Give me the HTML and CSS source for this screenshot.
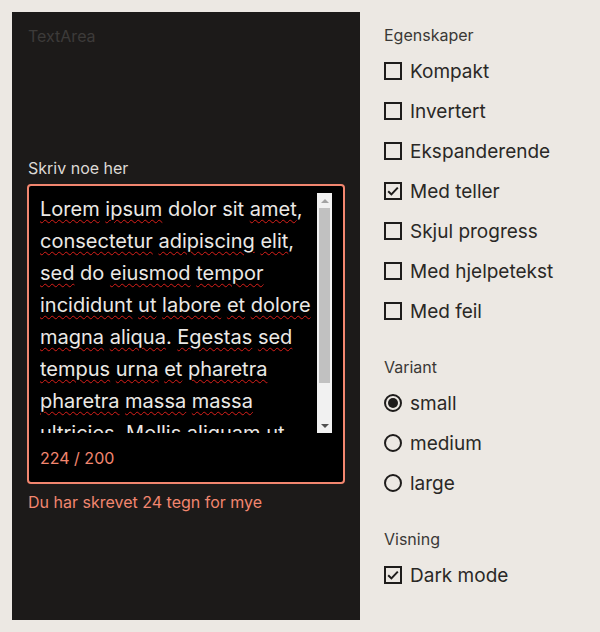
FILE: index.html
```html
<!DOCTYPE html>
<html lang="nb">
<head>
<meta charset="utf-8">
<link rel="stylesheet" href="styles.css">
</head>
<body>
<main class="page">
  <section class="preview">
    <div class="preview-title">TextArea</div>
    <div class="textfield">
      <label class="tf-label">Skriv noe her</label>
      <div class="tf-box">
        <div class="tf-scroll">
          <div class="tf-input"><span class="sp">Lorem</span> <span class="sp">ipsum</span> dolor sit <span class="sp">amet</span>,<br><span class="sp">consectetur</span> <span class="sp">adipiscing</span> <span class="sp">elit</span>,<br><span class="sp">sed</span> do <span class="sp">eiusmod</span> <span class="sp">tempor</span><br><span class="sp">incididunt</span> <span class="sp">ut</span> <span class="sp">labore</span> <span class="sp">et</span> <span class="sp">dolore</span><br><span class="sp">magna</span> <span class="sp">aliqua</span>. <span class="sp">Egestas</span> <span class="sp">sed</span><br><span class="sp">tempus</span> <span class="sp">urna</span> <span class="sp">et</span> <span class="sp">pharetra</span><br><span class="sp">pharetra</span> <span class="sp">massa</span> <span class="sp">massa</span><br><span class="sp">ultricies</span>. <span class="sp">Mollis</span> <span class="sp">aliquam</span> <span class="sp">ut</span><br><span class="sp">porttitor</span> <span class="sp">leo</span>.</div>
          <div class="scrollbar">
            <div class="sb-btn"><span class="tri-up"></span></div>
            <div class="sb-track"><div class="sb-thumb"></div></div>
            <div class="sb-btn"><span class="tri-down"></span></div>
          </div>
        </div>
        <div class="tf-counter">224 / 200</div>
      </div>
      <div class="tf-error">Du har skrevet 24 tegn for mye</div>
    </div>
  </section>
  <aside class="controls">
    <fieldset class="group">
      <legend class="group-title">Egenskaper</legend>
      <div class="opt"><span class="cb"></span><span>Kompakt</span></div>
      <div class="opt"><span class="cb"></span><span>Invertert</span></div>
      <div class="opt"><span class="cb"></span><span>Ekspanderende</span></div>
      <div class="opt"><span class="cb checked"><svg viewBox="0 0 14 14" width="14" height="14"><polyline points="2.2,7.2 5.4,10.4 11.8,3.6" fill="none" stroke="#1e1c1b" stroke-width="2"/></svg></span><span>Med teller</span></div>
      <div class="opt"><span class="cb"></span><span>Skjul progress</span></div>
      <div class="opt"><span class="cb"></span><span>Med hjelpetekst</span></div>
      <div class="opt"><span class="cb"></span><span>Med feil</span></div>
    </fieldset>
    <fieldset class="group">
      <legend class="group-title">Variant</legend>
      <div class="opt"><span class="rb selected"></span><span>small</span></div>
      <div class="opt"><span class="rb"></span><span>medium</span></div>
      <div class="opt"><span class="rb"></span><span>large</span></div>
    </fieldset>
    <fieldset class="group">
      <legend class="group-title">Visning</legend>
      <div class="opt"><span class="cb checked"><svg viewBox="0 0 14 14" width="14" height="14"><polyline points="2.2,7.2 5.4,10.4 11.8,3.6" fill="none" stroke="#1e1c1b" stroke-width="2"/></svg></span><span>Dark mode</span></div>
    </fieldset>
  </aside>
</main>
</body>
</html>
```

FILE: styles.css
```css
* { box-sizing: border-box; }
html, body { margin: 0; padding: 0; }
body {
  background: #ece8e3;
  font-family: "Inter", "Noto Sans", sans-serif;
  color: #2b2927;
}
.page {
  display: flex;
  padding: 12px;
  height: 632px;
}
.preview {
  width: 348px;
  height: 608px;
  background: #1c1a19;
  padding: 14px 15px 0 15px;
  display: flex;
  flex-direction: column;
}
.preview-title {
  font-size: 16px;
  line-height: 20px;
  color: #3d3b39;
  padding-left: 1px;
}
.textfield {
  margin-top: 112px;
  display: flex;
  flex-direction: column;
}
.tf-label {
  font-size: 16px;
  line-height: 20px;
  color: #dcd9d5;
  padding-left: 1px;
  margin-bottom: 6px;
}
.tf-box {
  border: 2px solid #f2866f;
  border-radius: 4px;
  background: #000;
  padding: 7px 11px 14px 11px;
}
.tf-scroll {
  display: flex;
  height: 240px;
}
.tf-input {
  flex: 1;
  overflow: hidden;
  font-size: 20px;
  line-height: 32px;
  color: #ebe9e6;
  white-space: nowrap;
}
.sp {
  text-decoration: underline wavy #d9201a;
  text-decoration-thickness: 1px;
  text-underline-offset: 3px;
}
.scrollbar {
  width: 15px;
  flex: none;
  background: #f1f1f1;
  display: flex;
  flex-direction: column;
}
.sb-btn {
  height: 15px;
  display: flex;
  align-items: center;
  justify-content: center;
}
.tri-up {
  width: 0;
  height: 0;
  border-left: 4px solid transparent;
  border-right: 4px solid transparent;
  border-bottom: 4px solid #a3a3a3;
}
.tri-down {
  width: 0;
  height: 0;
  border-left: 4px solid transparent;
  border-right: 4px solid transparent;
  border-top: 4px solid #505050;
}
.sb-track {
  flex: 1;
}
.sb-thumb {
  margin: 0 2px;
  height: 175px;
  background: #c1c1c1;
}
.tf-counter {
  margin-top: 15px;
  font-size: 16px;
  line-height: 20px;
  color: #f2866f;
}
.tf-error {
  margin-top: 8px;
  font-size: 16px;
  line-height: 20px;
  color: #f2866f;
  padding-left: 1px;
}
.controls {
  margin-left: 24px;
  display: flex;
  flex-direction: column;
  padding-top: 13px;
  gap: 26px;
}
.group {
  border: 0;
  margin: 0;
  padding: 0;
  display: flex;
  flex-direction: column;
}
.group-title {
  padding: 0;
  font-size: 16px;
  line-height: 20px;
  color: #3a3836;
  margin-bottom: 6px;
}
.opt {
  display: flex;
  align-items: center;
  gap: 8px;
  height: 40px;
  font-size: 19px;
  color: #2a2826;
}
.cb, .rb {
  width: 18px;
  height: 18px;
  border: 2px solid #1e1c1b;
  flex: none;
  display: flex;
  align-items: center;
  justify-content: center;
}
.rb { border-radius: 50%; }
.rb.selected::after {
  content: "";
  width: 10px;
  height: 10px;
  border-radius: 50%;
  background: #1e1c1b;
}
```
